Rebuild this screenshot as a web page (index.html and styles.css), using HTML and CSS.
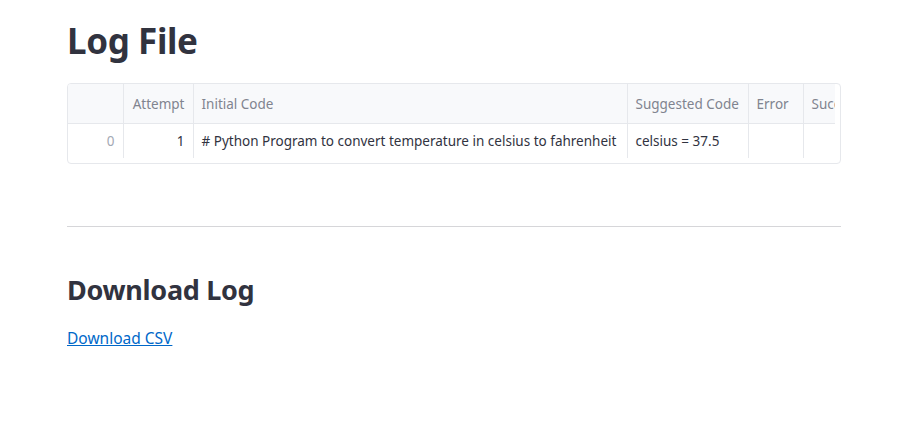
FILE: index.html
```html
<!DOCTYPE html>
<html>
<head>
<meta charset="utf-8">
<link rel="stylesheet" href="styles.css">
</head>
<body>
<main class="main">
  <h1 class="title">Log File</h1>
  <div class="frame">
    <div class="scroller">
      <table class="grid">
        <colgroup>
          <col class="c-idx"><col class="c-att"><col class="c-init"><col class="c-sugg"><col class="c-err"><col class="c-suc">
        </colgroup>
        <thead>
          <tr>
            <th></th>
            <th class="num">Attempt</th>
            <th>Initial Code</th>
            <th>Suggested Code</th>
            <th>Error</th>
            <th>Success</th>
          </tr>
        </thead>
        <tbody>
          <tr>
            <td class="idx">0</td>
            <td class="num">1</td>
            <td># Python Program to convert temperature in celsius to fahrenheit</td>
            <td>celsius = 37.5</td>
            <td></td>
            <td></td>
          </tr>
        </tbody>
      </table>
    </div>
  </div>
  <hr class="divider">
  <h2 class="subtitle">Download Log</h2>
  <a class="link" href="#">Download CSV</a>
</main>
</body>
</html>
```
FILE: styles.css
```css
html, body {
  margin: 0;
  padding: 0;
  background: #ffffff;
}
body {
  font-family: "Source Sans Pro", "Noto Sans", sans-serif;
  color: #31333f;
}
.main {
  width: 774px;
  margin-left: 67px;
  padding-top: 14px;
}
.title {
  margin: 0;
  font-size: 35px;
  font-weight: 700;
  line-height: 54px;
  letter-spacing: -0.4px;
  height: 54px;
}
.frame {
  margin-top: 15px;
  border: 1px solid #e6e8ec;
  border-radius: 4px;
  height: 79px;
  padding-right: 5px;
  overflow: hidden;
}
.scroller {
  overflow: hidden;
  height: 74px;
}
.grid {
  border-collapse: collapse;
  table-layout: fixed;
  width: 790px;
  font-size: 13.5px;
}
.c-idx { width: 55px; }
.c-att { width: 70px; }
.c-init { width: 434px; }
.c-sugg { width: 121px; }
.c-err { width: 55px; }
.c-suc { width: 55px; }
.grid th {
  background: #f8f9fb;
  color: #80848f;
  font-weight: 400;
  text-align: left;
  height: 39px;
  padding: 0 8px;
  white-space: nowrap;
  overflow: hidden;
  border-right: 1px solid #e6e8ec;
  border-bottom: 1px solid #e6e8ec;
}
.grid td {
  height: 34px;
  padding: 0 8px;
  white-space: nowrap;
  overflow: hidden;
  border-right: 1px solid #e6e8ec;
}
.grid th.num, .grid td.num { text-align: right; }
.grid td.idx { text-align: right; color: #a3a8b4; }
.divider {
  margin: 62px 0 0 0;
  border: 0;
  border-top: 1px solid #d6d6d9;
  height: 0;
}
.subtitle {
  margin: 43px 0 0 0;
  font-size: 27px;
  font-weight: 700;
  line-height: 40px;
  letter-spacing: -0.3px;
}
.link {
  display: inline-block;
  margin-top: 17px;
  font-size: 15.5px;
  color: #0068c9;
  text-decoration: underline;
}
```
